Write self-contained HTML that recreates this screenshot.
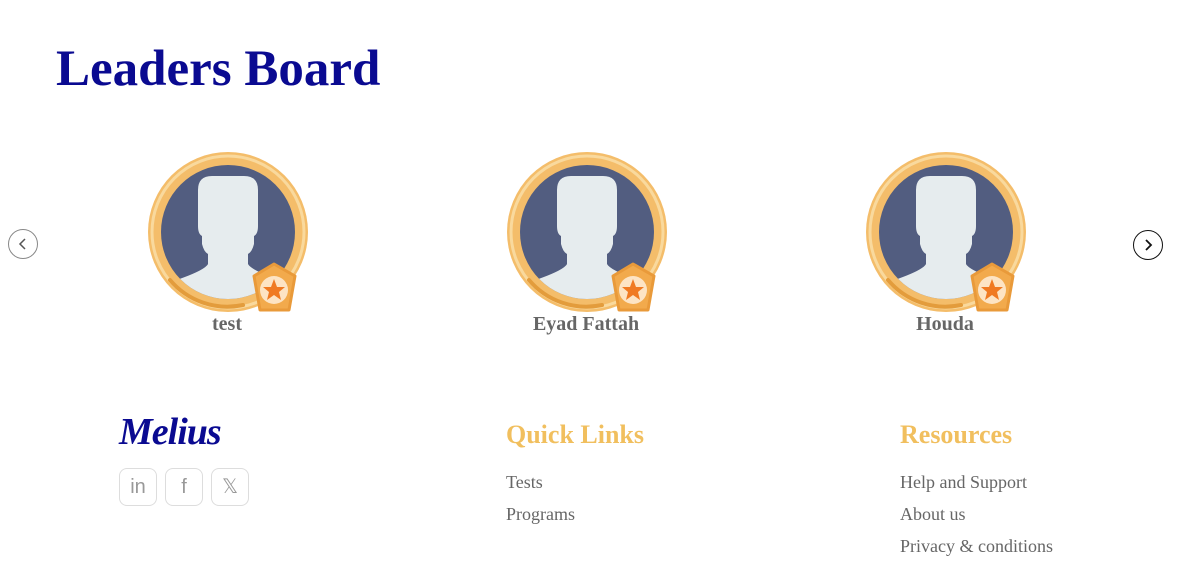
<!DOCTYPE html>
<html><head><style>
body{margin:0;width:1178px;height:572px;background:#fff;font-family:"Liberation Serif",serif;position:relative;overflow:hidden}
.a{position:absolute}
h1{position:absolute;left:56px;top:40px;margin:0;font-size:51px;color:#0a0a91;font-weight:bold}
.name{position:absolute;width:200px;text-align:center;font-weight:bold;font-size:20px;color:#666;top:313px}
.arrow{position:absolute;width:30px;height:30px;border-radius:50%;box-sizing:border-box;top:229px}
.h{position:absolute;top:420px;font-size:26px;font-weight:bold;color:#f1bf5e}
.l{position:absolute;font-size:18px;color:#666}
.soc{position:absolute;top:468px;width:38px;height:38px;border:1px solid #ddd;border-radius:8px;box-sizing:border-box;color:#999;font-family:"Liberation Sans",sans-serif;text-align:center;line-height:36px;font-size:20px}
</style></head><body>
<h1>Leaders Board</h1>
<svg width="0" height="0" style="position:absolute"><defs>
<clipPath id="cp"><circle cx="80" cy="80" r="67"/></clipPath>
<g id="av">
<circle cx="80" cy="80" r="80" fill="#f4bd6a"/>
<circle cx="80" cy="80" r="76" fill="none" stroke="#f9d99d" stroke-width="3"/>
<path d="M22 128 A75 75 0 0 0 95 153" fill="none" stroke="#e39c3c" stroke-width="4" stroke-linecap="round"/>
<circle cx="80" cy="80" r="67" fill="#525d80"/>
<g clip-path="url(#cp)" fill="#e6ecee">
<path d="M50 38 Q50 24 64 24 L96 24 Q110 24 110 38 L110 74 Q110 82 106 84 L106 92 Q104 100 100 102 L100 112 Q104 120 150 134 L150 170 L10 170 L10 134 Q56 120 60 112 L60 102 Q56 100 54 92 L54 84 Q50 82 50 74 Z"/>
</g>
<path d="M126 112 L147 124 L141 158 L112 158 L106 124 Z" fill="#f2aa4c" stroke="#e99a3a" stroke-width="3" stroke-linejoin="round"/>
<circle cx="126" cy="138" r="14" fill="#fde4c4"/>
<path d="M126 127 L129 135 L137 135 L131 140 L133 148 L126 143 L119 148 L121 140 L115 135 L123 135 Z" fill="#f07a22"/>
</g></defs></svg>
<svg class="a" style="left:148px;top:152px" width="162" height="162"><use href="#av"/></svg>
<svg class="a" style="left:507px;top:152px" width="162" height="162"><use href="#av"/></svg>
<svg class="a" style="left:866px;top:152px" width="162" height="162"><use href="#av"/></svg>
<div class="name" style="left:127px">test</div>
<div class="name" style="left:486px">Eyad Fattah</div>
<div class="name" style="left:845px">Houda</div>
<div class="arrow" style="left:8px;border:1px solid #888"><svg width="28" height="28"><path d="M16 9 L11 14 L16 19" fill="none" stroke="#555" stroke-width="1.5"/></svg></div>
<div class="arrow" style="left:1133px;top:230px;border:1.5px solid #111"><svg width="28" height="28"><path d="M12 9 L17 14 L12 19" fill="none" stroke="#111" stroke-width="1.8"/></svg></div>
<div class="a" style="left:119px;top:410px;font-size:38px;font-style:italic;font-weight:bold;color:#0a0a91;letter-spacing:-1px">Melius</div>
<div class="soc" style="left:119px">in</div>
<div class="soc" style="left:165px">f</div>
<div class="soc" style="left:211px">𝕏</div>
<div class="h" style="left:506px">Quick Links</div>
<div class="l" style="left:506px;top:472px">Tests</div>
<div class="l" style="left:506px;top:504px">Programs</div>
<div class="h" style="left:900px">Resources</div>
<div class="l" style="left:900px;top:472px">Help and Support</div>
<div class="l" style="left:900px;top:504px">About us</div>
<div class="l" style="left:900px;top:536px">Privacy &amp; conditions</div>
</body></html>
